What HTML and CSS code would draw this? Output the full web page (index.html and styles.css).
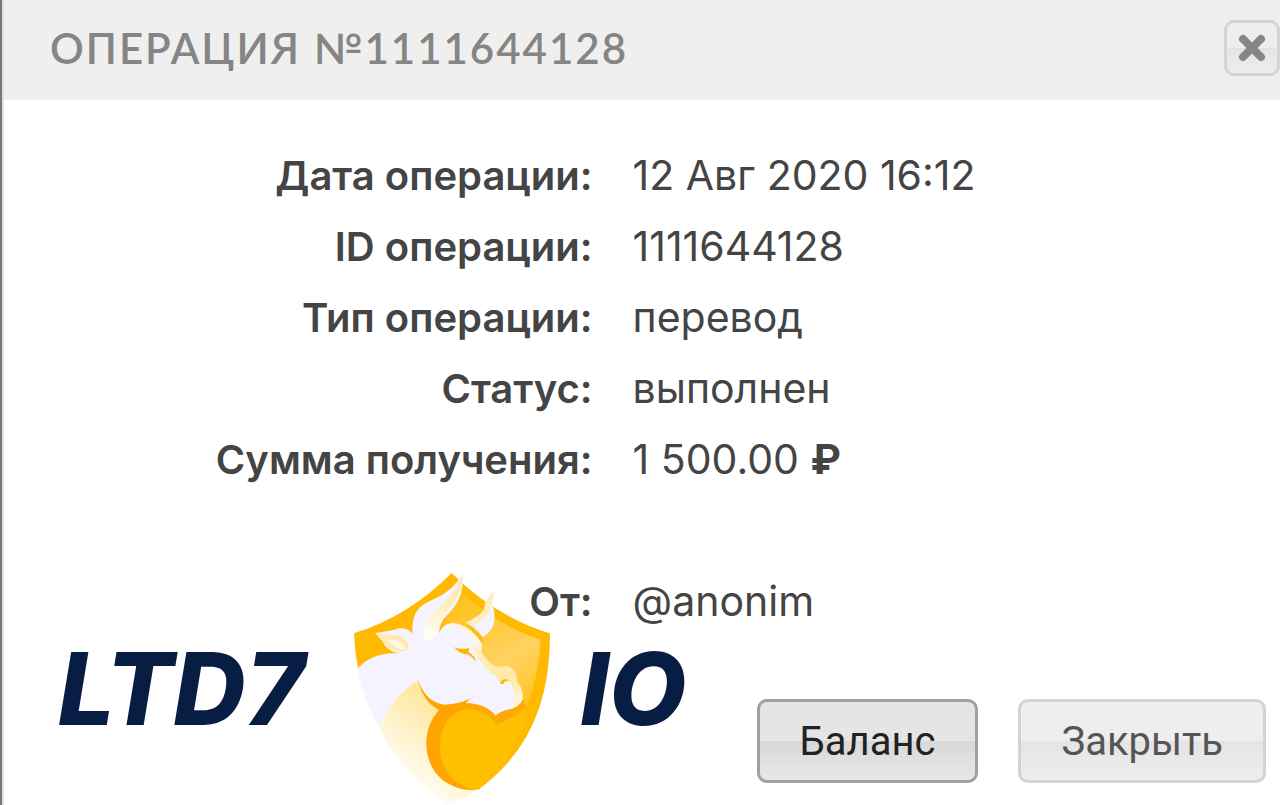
FILE: index.html
```
<!DOCTYPE html>
<html lang="ru">

<head>
    <meta charset="UTF-8">
    <meta name="viewport" content="width=device-width, initial-scale=1.0">
    <title>Операция №1111644128</title>
    <link rel="stylesheet" href="styles.css">
</head>

<body>
    <div class="dialog">
        <header class="dialog-header">
            <h1>ОПЕРАЦИЯ №1111644128</h1>
            <button class="close-btn" type="button" aria-label="Закрыть окно">
                <svg width="28" height="28" viewBox="0 0 28 28">
                    <path d="M5 5L23 23M23 5L5 23" stroke="#858585" stroke-width="8" stroke-linecap="round"/>
                </svg>
            </button>
        </header>

        <dl class="details">
            <dt>Дата операции:</dt>
            <dd>12 Авг 2020 16:12</dd>
            <dt>ID операции:</dt>
            <dd>1111644128</dd>
            <dt>Тип операции:</dt>
            <dd>перевод</dd>
            <dt>Статус:</dt>
            <dd>выполнен</dd>
            <dt>Сумма получения:</dt>
            <dd>1 500.00 <b>₽</b></dd>
            <dt class="sender">От:</dt>
            <dd class="sender">@anonim</dd>
        </dl>

        <footer class="actions">
            <button class="btn btn-primary" type="button">Баланс</button>
            <button class="btn" type="button">Закрыть</button>
        </footer>

        <div class="logo">
            <span>LTD7</span>
            <svg class="shield" viewBox="45 39 588 696">
                <defs>
                    <linearGradient id="panel" x1="370" y1="80" x2="566" y2="450" gradientUnits="userSpaceOnUse">
                        <stop offset="0" stop-color="#ffbf10"/>
                        <stop offset="0.6" stop-color="#ffd260"/>
                        <stop offset="1" stop-color="#ffc31c"/>
                    </linearGradient>
                    <linearGradient id="chest" x1="290" y1="430" x2="150" y2="620" gradientUnits="userSpaceOnUse">
                        <stop offset="0" stop-color="#ffe7a0"/>
                        <stop offset="1" stop-color="#fffdf6"/>
                    </linearGradient>
                    <linearGradient id="horn" x1="350" y1="100" x2="270" y2="225" gradientUnits="userSpaceOnUse">
                        <stop offset="0" stop-color="#ffe9a8"/>
                        <stop offset="1" stop-color="#fffdf5"/>
                    </linearGradient>
                    <linearGradient id="snout" x1="400" y1="260" x2="540" y2="440" gradientUnits="userSpaceOnUse">
                        <stop offset="0" stop-color="#fff0c4"/>
                        <stop offset="0.6" stop-color="#ffe7a6"/>
                        <stop offset="1" stop-color="#fff6dc"/>
                    </linearGradient>
                </defs>
                <!-- shield -->
                <path d="M45 220Q210 168 338 39Q466 168 632 220Q638 530 418 688L300 640L240 365L57 325Q47 275 45 220Z" fill="#ffb900"/>
                <path d="M360 88Q470 196 604 239Q600 345 566 432L470 455L300 230Z" fill="url(#panel)"/>
                <!-- chest -->
                <path d="M238 360Q160 405 122 505Q195 652 325 735Q380 718 418 688L300 640L300 450Q255 420 238 360Z" fill="url(#chest)"/>
                <!-- coin -->
                <path d="M238 360Q258 415 305 432Q350 440 417 406L550 410Q559 430 555 446Q515 482 470 493L418 688Q375 696 338 676C255 640 236 520 300 450Q250 424 238 360Z" fill="#ffa400"/>
                <path d="M385 448C440 448 466 478 472 493Q515 482 555 446L570 430Q540 600 418 688C345 686 303 625 303 560C303 500 335 452 385 448Z" fill="#ffc000"/>
                <path d="M555 446L566 432Q540 600 418 688Q420 560 472 493Q515 482 555 446Z" fill="#ffc000"/>
                <path d="M566 432Q604 345 604 239L632 220Q636 500 418 688L480 493Q525 480 555 446Z" fill="#ffb900"/>
                <path d="M472 493Q515 482 555 446Q580 520 418 688Z" fill="#ffc000"/>
                <path d="M380 430Q440 430 470 466L551 415Q561 432 555 446Q510 484 470 493Q440 448 385 448Z" fill="#ffa806"/>
                <!-- head and neck -->
                <path d="M57 325Q100 275 180 280L220 218C218 120 275 135 330 90Q360 65 370 39Q380 110 325 165Q302 185 300 220C312 190 335 186 358 192Q398 204 430 252L426 276Q452 320 480 322Q505 312 522 328Q534 340 533 364Q553 386 551 418Q544 438 517 447Q480 454 470 467Q440 430 380 429Q395 414 417 406Q350 440 305 432C270 423 247 392 238 360Q160 405 122 505Q68 410 57 325Z" fill="#f4f3ff"/>
                <!-- horns and ear -->
                <path d="M370 39Q372 100 325 150Q300 178 297 220Q280 248 254 235C252 180 280 165 318 125Q360 85 370 39Z" fill="url(#horn)"/>
                <path d="M108 219Q156 213 183 204Q210 205 221 222L218 260Q202 280 180 280Q145 275 130 244Z" fill="#f4f3ff"/>
                <path d="M112 221Q155 225 184 228Q210 240 210 267Q195 277 177 275Q143 264 112 221Z" fill="#ffe9ad"/>
                <path d="M145 240Q185 232 201 269Q172 270 145 240Z" fill="#fff9e8"/>
                <path d="M465 94Q455 125 459 132Q469 155 466 181Q464 212 431 231Q409 200 380 188Q450 160 465 94Z" fill="#f4f3ff"/>
                <path d="M465 94Q440 110 434 148Q425 178 380 188L402 197Q446 180 459 132Z" fill="#ffedbb"/>
                <path d="M382 196Q408 204 432 236L430 254Q412 222 382 196Z" fill="#ffb81a"/>
                <!-- muzzle -->
                <path d="M310 204Q332 184 358 192Q398 204 430 252L426 270Q400 226 362 208Q334 196 310 204Z" fill="#fff6df"/>
                <path d="M398 252Q420 262 426 276Q452 320 480 322Q505 312 522 328Q534 340 533 364Q553 386 551 418Q544 436 520 444Q533 400 515 368Q500 362 484 372Q478 350 455 338Q420 314 398 252Z" fill="url(#snout)"/>
                <path d="M345 262Q370 270 391 264L389 277Q409 289 410 305Q394 280 376 282Q362 280 345 262Z" fill="#ffb400"/>
                <path d="M484 372Q485 351 513 361Q494 361 494 372Z" fill="#ffb400"/>
            </svg>
            <span>IO</span>
        </div>
    </div>
</body>

</html>
```

FILE: styles.css
```
* {
    box-sizing: border-box;
}

body {
    margin: 0;
    background-color: #fff;
    color: #444;
    font-family: Inter, "Noto Sans", sans-serif;
}

.dialog {
    position: relative;
    min-height: 100vh;
    border-left: 2px solid #73777b;
    box-shadow: inset 2px 0 #dfe2e4;
    padding-left: 2px;
    overflow: hidden;
}

.dialog-header {
    display: flex;
    justify-content: space-between;
    align-items: center;
    height: 100px;
    padding: 0 0 4px 46px;
    background-color: #efefef;
}

h1 {
    margin: 0;
    color: #858585;
    font-family: Lato, "Noto Sans", sans-serif;
    font-size: 42px;
    font-weight: 600;
    letter-spacing: 2px;
    white-space: nowrap;
}

button {
    border: 3px solid #d3d3d3;
    border-radius: 10px;
    background: linear-gradient(#eee 50%, #e4e4e4 50%, #eee);
    cursor: pointer;
}

.close-btn {
    display: flex;
    justify-content: center;
    align-items: center;
    width: 56px;
    height: 56px;
    padding: 0;
}

.details {
    display: grid;
    grid-template-columns: 10fr 11fr;
    column-gap: 40px;
    margin: 0;
    padding-top: 40px;
    font-size: 40px;
    line-height: 71px;
}

dt {
    font-weight: 600;
    text-align: right;
}

dd {
    margin: 0;
    font-size: 41px;
}

.sender {
    margin-top: 71px;
}

.actions {
    display: flex;
    justify-content: flex-end;
    gap: 40px;
    padding: 62px 14px 20px;
}

.btn {
    height: 84px;
    padding: 0 40px;
    color: #555;
    font-family: Roboto, sans-serif;
    font-size: 40px;
}

.btn-primary {
    border-color: #a0a0a0;
    background: linear-gradient(#e5e5e5 50%, #d8d8d8 50%, #e8e8e8);
    color: #222;
}

.logo {
    position: absolute;
    left: 56px;
    bottom: 0;
    display: flex;
    align-items: center;
    color: #081d43;
    font-size: 100px;
    font-style: italic;
    font-weight: 800;
    line-height: 1;
}

.shield {
    width: 196px;
    height: 232px;
    margin: 0 30px 0 50px;
}
```
